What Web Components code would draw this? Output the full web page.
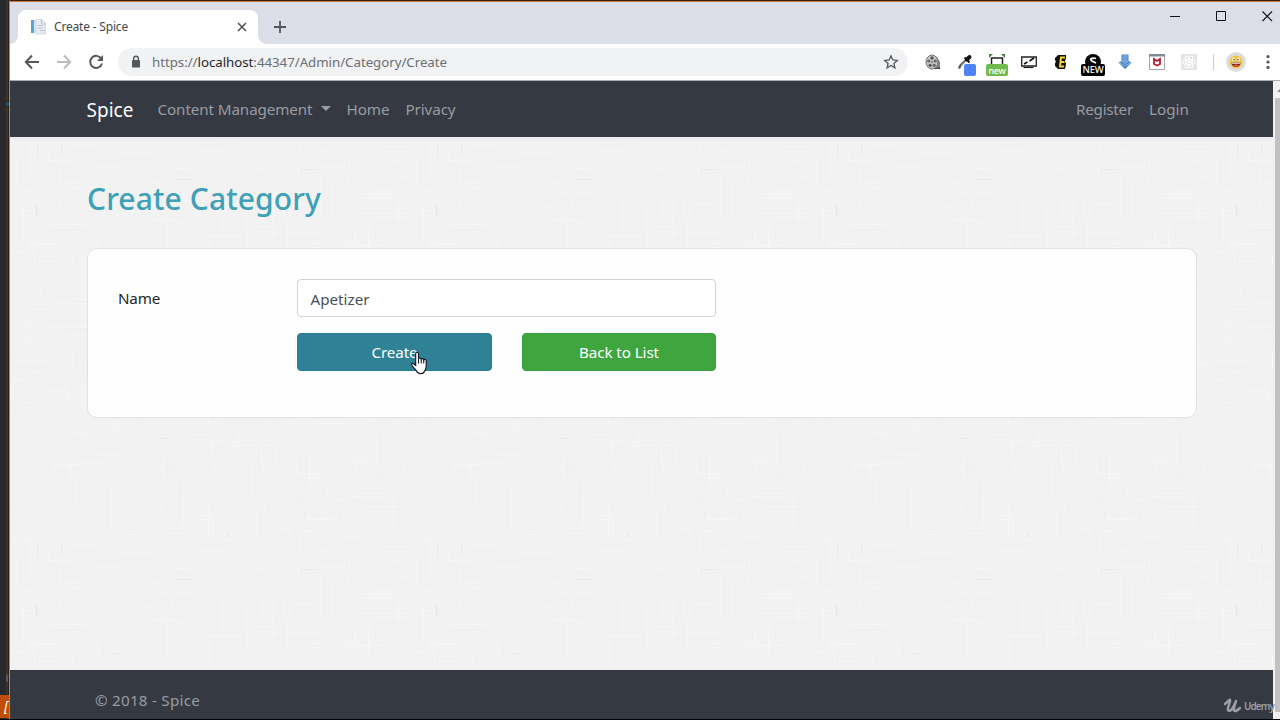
<!DOCTYPE html>
<html lang="en">
<head>
<meta charset="utf-8">
<title>Create - Spice</title>
<style>
html,body{margin:0;padding:0;width:1280px;height:720px;overflow:hidden;background:#29292b;font-family:"Noto Sans","Open Sans",sans-serif}
</style>
</head>
<body>
<desktop-screen></desktop-screen>
<script>
function define(name, html, setup) {
  const tpl = document.createElement('template');
  tpl.innerHTML = html;
  customElements.define(name, class extends HTMLElement {
    constructor() {
      super();
      this.attachShadow({mode: 'open'}).append(tpl.content.cloneNode(true));
    }
    connectedCallback() { if (setup) setup(this, this.shadowRoot); }
  });
}

/* One line of text tracked to the width given in its w attribute. */
define('text-run', `<style>:host{display:inline-block;white-space:nowrap;line-height:1}span{display:inline-block}</style><span><slot></slot></span>`, (el, root) => {
  const want = +el.getAttribute('w');
  const span = root.querySelector('span');
  const natural = span.getBoundingClientRect().width;
  const n = el.textContent.length;
  if (want && natural) span.style.letterSpacing = ((want - natural) / n) + 'px';
  el.style.width = want + 'px';
});

/* Woven linen backdrop: a 400px tile of faint short threads. */
define('linen-texture', `<style>:host{display:block;position:absolute;inset:0}svg{display:block;width:100%;height:100%}</style>
<svg><defs><pattern id="p" width="400" height="400" patternUnits="userSpaceOnUse"></pattern></defs><rect width="100%" height="100%" fill="url(#p)"/></svg>`, (el, root) => {
  let seed = 7, out = '';
  const rnd = () => (seed = (seed * 16807) % 2147483647) / 2147483647;
  for (let i = 0; i < 520; i++) {
    const x = Math.floor(rnd() * 400), y = Math.floor(rnd() * 400), len = 8 + Math.floor(rnd() * 36);
    const horizontal = rnd() < .55;
    const tone = rnd() < .5 ? 'rgba(255,255,255,.28)' : 'rgba(0,0,0,.009)';
    out += `<rect x="${x}" y="${y}" width="${horizontal ? len : 1}" height="${horizontal ? 1 : len}" fill="${tone}"/>`;
  }
  for (const [x, y, w, h] of [[166,442,16,1],[291,432,18,1],[217,396,1,11],[27,406,1,14],[51,405,1,13],[26,467,1,14],[148,301,10,1],[101,516,10,1]])
    out += `<rect x="${x}" y="${y % 400}" width="${w}" height="${h}" fill="rgba(0,0,0,.045)"/>`;
  root.getElementById('p').innerHTML = out;
});

define('tab-strip', `<style>
:host{display:flex;height:42px;background:#dcdee7;align-items:flex-end;box-sizing:border-box}
.tab{display:flex;align-items:center;position:relative;margin-left:8px;width:240px;height:34px;background:#fff;border-radius:8px 8px 0 0;box-sizing:border-box;padding:0 11px 0 12px;color:#45474b;font-size:12px}
.tab:before,.tab:after{content:"";position:absolute;bottom:0;width:8px;height:8px}
.tab:before{left:-8px;background:radial-gradient(circle at 0 0,transparent 7.5px,#fff 8px)}
.tab:after{right:-8px;background:radial-gradient(circle at 100% 0,transparent 7.5px,#fff 8px)}
.title{flex:1;margin-left:8px;margin-top:-2px}
svg{display:block}
.plus{margin:0 0 11px 16px}
.win{margin-left:auto;display:flex;margin-bottom:22px;gap:34px;margin-right:7px}
</style>
<div class="tab">
<svg width="16" height="16" viewBox="0 0 16 16"><path d="M1 1h3v13H1z" fill="#5ba2d6"/><path d="M4 1h2v13H4z" fill="#d6e8f4"/><path d="M6 .5h6l3.5 3.5v11H6z" fill="#e9ecf2" stroke="#c9ced8" stroke-width=".7"/><path d="M11.5.5V5h4M8 6.5h5M8 9h5M10 11.5h5" fill="none" stroke="#b8bec9" stroke-width=".9"/></svg>
<div class="title"><text-run w="74">Create - Spice</text-run></div>
<svg width="10" height="10" viewBox="0 0 10 10"><path d="M1 1l8 8M9 1l-8 8" stroke="#4b4d51" stroke-width="1.5"/></svg>
</div>
<svg class="plus" width="12" height="12" viewBox="0 0 12 12"><path d="M6 0v12M0 6h12" stroke="#54565a" stroke-width="1.8"/></svg>
<div class="win">
<svg width="12" height="12" viewBox="0 0 12 12"><path d="M1 6.5h10" stroke="#111"/></svg>
<svg width="12" height="12" viewBox="0 0 12 12"><path d="M1.5 1.5h9v9h-9z" fill="none" stroke="#111"/></svg>
<svg width="12" height="12" viewBox="0 0 12 12"><path d="M1.5 1.5l9.5 9.5M11 1.5L1.500 11" stroke="#111" stroke-width="1.1"/></svg>
</div>`);

define('ext-bar', `<style>
:host{display:flex;align-items:center;height:36px}
.i{position:relative;width:16px;height:16px;margin-right:16px;flex:none}
svg{display:block;flex:none}
.badge{position:absolute;border-radius:2px;color:#fff;display:flex;align-items:center;justify-content:center}
.sep{width:1px;height:16px;background:#cbccd0;margin:0 12px 0 0;flex:none}
.avatar{margin-right:20px}
</style>
<div class="i"><svg width="16" height="16" viewBox="0 0 16 16"><path d="M7 1l5 2 3 5v7H8z" fill="#858585"/><path d="M8 15l7-2v2z" fill="#444"/><ellipse cx="7" cy="8" rx="6" ry="7" fill="#c6c6c6" stroke="#707070"/><circle cx="7" cy="4" r="1.7" fill="#555"/><circle cx="3.8" cy="7" r="1.6" fill="#666"/><circle cx="10.2" cy="7" r="1.6" fill="#666"/><circle cx="5.2" cy="11.3" r="1.6" fill="#555"/><circle cx="9.2" cy="11.3" r="1.6" fill="#666"/><circle cx="7" cy="8" r=".8" fill="#444"/></svg></div>
<div class="i"><svg width="16" height="16" viewBox="0 0 16 16"><path d="M9.5 5.5L3.5 11.5 2 14.500" fill="none" stroke="#4b564f" stroke-width="2.300"/><path d="M9 6.500L4 11.500" stroke="#afc0b4"/><path d="M7.500 3.500l5 5" stroke="#1b1b1b" stroke-width="2"/><path d="M10 5.500L12.500 3" stroke="#151515" stroke-width="4" stroke-linecap="round"/></svg><div class="badge" style="left:7px;top:10px;width:12px;height:12px;background:#4d83f5"></div></div>
<div class="i"><svg width="16" height="16" viewBox="0 0 16 16"><path d="M2.500 10V4h11v6" fill="none" stroke="#252525" stroke-width="1.500"/><path d="M0 0h4L0 4zM16 0h-4l4 4z" fill="#418338"/></svg><div class="badge" style="left:-3px;top:10px;width:22px;height:12px;background:#71ba4d;font-size:9px;font-weight:500"><text-run w="17">new</text-run></div></div>
<div class="i"><svg width="16" height="16" viewBox="0 0 16 16"><path d="M.7 3h14.600v9H.7z" fill="#fff" stroke="#222" stroke-width="1.300"/><path d="M2.500 13.500h10" stroke="#222" stroke-width="1.200"/><path d="M3 10l3.500-2M8.500 7l4.500-3" stroke="#111" stroke-width="1.600"/></svg></div>
<div class="i"><svg width="16" height="16" viewBox="0 0 16 16"><path d="M5 1h8v3l-1 3 1 3-1 5H5L2 12V9l1-1-1-2V4z" fill="#111"/><path d="M12 3.500H8L7 12.500H11M7.500 8h4" fill="none" stroke="#f4d533" stroke-width="2"/></svg></div>
<div class="i"><svg width="16" height="16" viewBox="0 0 16 16"><circle cx="8" cy="8" r="8" fill="#0a0a0a"/><path d="M11 4.500C7 3.500 4 5 7 7l4 2" fill="none" stroke="#fff" stroke-width="1.800"/></svg><div class="badge" style="left:-4px;top:10px;width:24px;height:12px;background:#000;font-size:9.500px;font-weight:500"><text-run w="21">NEW</text-run></div></div>
<div class="i"><svg width="16" height="16" viewBox="0 0 16 16"><path d="M4.500.5h7v6.500l3 1.500L8 15 1.500 8.500l3-1.500z" fill="#4580c3"/><path d="M5.500 1h5v7h-5z" fill="#6ea5dc"/><path d="M2.500 8.500L8 12l5.500-3.500M4.500 7L8 9.500 11.500 7" fill="none" stroke="#a8ccec" stroke-width=".8"/></svg></div>
<div class="i"><svg width="16" height="16" viewBox="0 0 16 16"><path d="M.5.5h15v15H.5z" fill="#fff" stroke="#a0a5aa"/><path d="M0 0h16v2.500H0z" fill="#7f8c96"/><path d="M5 5v5l3 1.500 3-1.500V5L8 7z" fill="none" stroke="#b51f2e" stroke-width="1.800"/></svg></div>
<div class="i"><svg width="16" height="16" viewBox="0 0 16 16"><rect width="16" height="16" rx="1" fill="#e4e4e5"/><g fill="none" stroke="#fff"><ellipse cx="8" cy="8" rx="6.500" ry="2.500"/><ellipse cx="8" cy="8" rx="6.500" ry="2.500" transform="rotate(60 8 8)"/><ellipse cx="8" cy="8" rx="6.500" ry="2.500" transform="rotate(120 8 8)"/></g><circle cx="8" cy="8" r="1.300" fill="#fff"/></svg></div>
<div class="sep"></div>
<svg class="avatar" width="20" height="20" viewBox="0 0 20 20"><circle cx="10" cy="10" r="10" fill="#dcdcdd"/><circle cx="10" cy="10" r="6.500" fill="#f2c43f"/><ellipse cx="7.500" cy="7.500" rx="1.800" ry="2" fill="#fff4c0"/><ellipse cx="12.500" cy="7.500" rx="1.800" ry="2" fill="#fff4c0"/><circle cx="8" cy="7.800" r=".8" fill="#583a19"/><circle cx="12" cy="7.800" r=".8" fill="#583a19"/><path d="M5.500 10.500h9c0 6-9 6-9 0z" fill="#762a20"/><path d="M6 10.700h8v1H6z" fill="#fff"/><path d="M7.500 14c1-2 4-2 5 0-1.500 1.400-3.500 1.400-5 0z" fill="#e95249"/></svg>
<svg width="4" height="16" viewBox="0 0 4 16"><g fill="#55575b"><circle cx="2" cy="2.600" r="1.600"/><circle cx="2" cy="8" r="1.600"/><circle cx="2" cy="13.400" r="1.600"/></g></svg>`);

define('tool-bar', `<style>
:host{display:flex;align-items:center;height:36px;background:#fff;border-bottom:1px solid #a8abb2}
.nav{display:flex;gap:16px;margin-left:14px}
svg{display:block;flex:none}
.omni{display:flex;align-items:center;width:790px;height:28px;border-radius:14px;background:#f0f2f4;margin-left:14px;box-sizing:border-box;padding:0 9px 0 10px;font-size:13.300px;color:#6c6f74}
.url{margin-left:8px;flex:1}
b{font-weight:400;color:#25272a}
ext-bar{margin-left:17px}
</style>
<div class="nav">
<svg width="16" height="16" viewBox="0 0 16 16"><path d="M15 8H2.500M8 1.500L1.800 8 8 14.500" fill="none" stroke="#55575b" stroke-width="2"/></svg>
<svg width="16" height="16" viewBox="0 0 16 16"><path d="M1 8h12.500M8 1.500L14.200 8 8 14.500" fill="none" stroke="#babcbe" stroke-width="2"/></svg>
<svg width="16" height="16" viewBox="0 0 16 16"><path d="M13.200 4.500A6 6 0 1 0 14 9.500" fill="none" stroke="#55575b" stroke-width="2"/><path d="M15 1v6H9z" fill="#55575b"/></svg>
</div>
<div class="omni">
<svg width="16" height="16" viewBox="0 0 16 16"><rect x="4" y="6" width="8" height="7.500" rx=".7" fill="#55575b"/><path d="M5.700 6.500V4.600a2.300 2.300 0 0 1 4.600 0v1.900" fill="none" stroke="#55575b" stroke-width="1.400"/></svg>
<div class="url"><text-run w="295">https://<b>localhost</b>:44347/Admin/Category/Create</text-run></div>
<svg width="16" height="16" viewBox="0 0 16 16"><path d="M8 1.800l1.800 4.200 4.500.4-3.400 3 1 4.400L8 11.500l-3.900 2.300 1-4.400-3.400-3 4.500-.4z" fill="none" stroke="#55575b" stroke-width="1.300"/></svg>
</div>
<ext-bar></ext-bar>`);

define('nav-bar', `<style>
:host{display:flex;align-items:center;height:56px;background:#343942;box-sizing:border-box;padding:2px 84px 0 76.500px;color:#9a9ca1;font-size:15.200px}
.brand{color:#fff;font-size:19px;margin-right:24px}
.item{margin-right:16px}
.caret{border:5px solid transparent;border-top-color:#9a9ca1;border-bottom:0;margin:0 16px 3px 8px}
.right{margin-left:auto;display:flex;gap:16px}
</style>
<text-run class="brand" w="47">Spice</text-run>
<text-run w="155">Content Management</text-run><span class="caret"></span>
<text-run class="item" w="43">Home</text-run>
<text-run w="50">Privacy</text-run>
<div class="right"><text-run w="57">Register</text-run><text-run w="40">Login</text-run></div>`);

define('action-button', `<style>
:host{display:flex;align-items:center;justify-content:center;height:38px;border-radius:4px;background:var(--tone);border:1px solid var(--edge);box-sizing:border-box;color:#fff;font-size:15.200px;padding-top:1px}
</style><slot></slot>`);

define('category-form', `<style>
:host{display:grid;grid-template-columns:179px 195px 194px;column-gap:0;row-gap:16px;height:170px;align-content:start;background:#fefefe;border:1px solid #dfe1e3;border-radius:10px;box-sizing:border-box;padding:30px;font-size:15.200px;color:#212529}
.label{height:38px;display:flex;align-items:center;padding-top:2px;box-sizing:border-box}
.field{grid-column:2/4;width:419px;height:38px;border:1px solid #ced2da;border-radius:4px;background:#fff;box-sizing:border-box;display:flex;align-items:center;padding:4px 12.500px 0;color:#495057}
.a{grid-column:2;--tone:#2f8296;--edge:#2a7b8f}
.b{grid-column:3;margin-left:30px;width:194px;--tone:#3fa63f;--edge:#3ca03c}
</style>
<div class="label"><text-run w="42">Name</text-run></div>
<div class="field"><text-run w="59">Apetizer</text-run></div>
<action-button class="a"><text-run w="46">Create</text-run></action-button>
<action-button class="b"><text-run w="80">Back to List</text-run></action-button>`);

define('web-page', `<style>
:host{display:flex;flex-direction:column;width:1263px;height:638px;background:#f2f2f2;position:relative;z-index:1}
main{flex:1;padding:41px 76px 0 77px;position:relative}
.shade{position:absolute;inset:0 0 auto 0;height:5px;background:linear-gradient(#e9e9f2,#f2f2f200)}
h1{margin:0;height:42px;display:flex;align-items:center;font-size:30px;font-weight:500;color:#3fa1b7;position:relative}
category-form{margin-top:28px;position:relative}
footer{height:49px;background:#343942;color:#9a9ca1;font-size:15.200px;box-sizing:border-box;padding:23px 0 0 85px;display:flex;justify-content:space-between}
.mark{display:flex;align-items:center;height:25px;margin:0 -1px 0 0;color:#9c9ea3;font-size:10px;font-weight:600;gap:3px}
</style>
<nav-bar></nav-bar>
<main><linen-texture></linen-texture><div class="shade"></div><h1><text-run w="234">Create Category</text-run></h1><category-form></category-form></main>
<footer><text-run w="105">© 2018 - Spice</text-run>
<div class="mark"><svg width="17" height="15" viewBox="0 0 17 15"><path d="M1 6c3-2 4-5 5-4 1 2-3 7-2 10 2 3 6-3 8-9-2 6-3 10-1 10 1 0 3-1 5-3" fill="none" stroke="#9c9ea3" stroke-width="2.500" stroke-linecap="round" stroke-linejoin="round"/></svg><text-run w="30">Udemy</text-run></div></footer>`);

define('scroll-bar', `<style>
:host{display:flex;flex-direction:column;width:7px;height:638px;background:#f1f1f1;box-sizing:border-box;padding-left:2px;overflow:hidden}
.cap{height:17px;flex:none}
.thumb{height:614px;background:#c1c1c1}
svg{display:block;margin:8px 0 0 2px}
</style><div class="cap"><svg width="6" height="3" viewBox="0 0 6 3"><path d="M0 3l3-3 3 3z" fill="#888"/></svg></div><div class="thumb"></div>`);

define('hand-cursor', `<style>:host{display:block;position:absolute;left:410px;top:351px;z-index:2}svg{display:block}</style>
<svg width="19" height="24" viewBox="0 0 19 25"><path d="M5.500 15V3c0-2.300 3-2.300 3 0v5c.5-1 2.500-.9 2.800.4.7-.8 2.400-.5 2.600.7.9-.7 2.600-.2 2.600 1.300v5c0 3-1 4-1.700 5.800C13.800 23 12.500 23.500 11 23.500c-2.500 0-3.700-.8-4.800-3L2.300 16c-2-2.200-.5-3.600 1-2.700z" fill="#fff" stroke="#151520" stroke-width="1.200"/><path d="M8.500 8v5M11.300 8.500V13M13.900 9.500V13" stroke="#151520" stroke-width="1.100"/></svg>`);

define('desktop-screen', `<style>
:host{display:flex;position:relative;width:1280px;height:720px;overflow:hidden;background:#000}
.edge{width:9px;height:719px;background:linear-gradient(90deg,#29292b 0 6px,#353437 6px 8px,#30210f 8px);display:flex;flex-direction:column;flex:none}
.tick{height:2px;width:3px;margin:103px 0 auto 6px;background:#22577c;flex:none}
.peek{height:23px;width:9px;margin-left:6px;font-size:11px;color:#8aa0b8;line-height:12px;flex:none;transform:scaleX(.33);transform-origin:0 0}
.status{height:23px;background:#c14d05;color:#fff;font-size:14px;line-height:22px;padding-left:4px;font-style:italic;flex:none;margin-bottom:1px}
.window{width:1271px;height:719px;box-sizing:border-box;border-left:1px solid #c98436;border-top:1px solid #3d1d0b;flex:none}
tab-strip{border-top:1px solid #c27b3d;height:43px}
.view{display:flex}
</style>
<div class="edge"><div class="tick"></div><div class="peek">V</div><div class="status">[</div></div>
<div class="window"><tab-strip></tab-strip><tool-bar></tool-bar><div class="view"><web-page></web-page><scroll-bar></scroll-bar></div></div>
<hand-cursor></hand-cursor>`);
</script>
</body>
</html>
